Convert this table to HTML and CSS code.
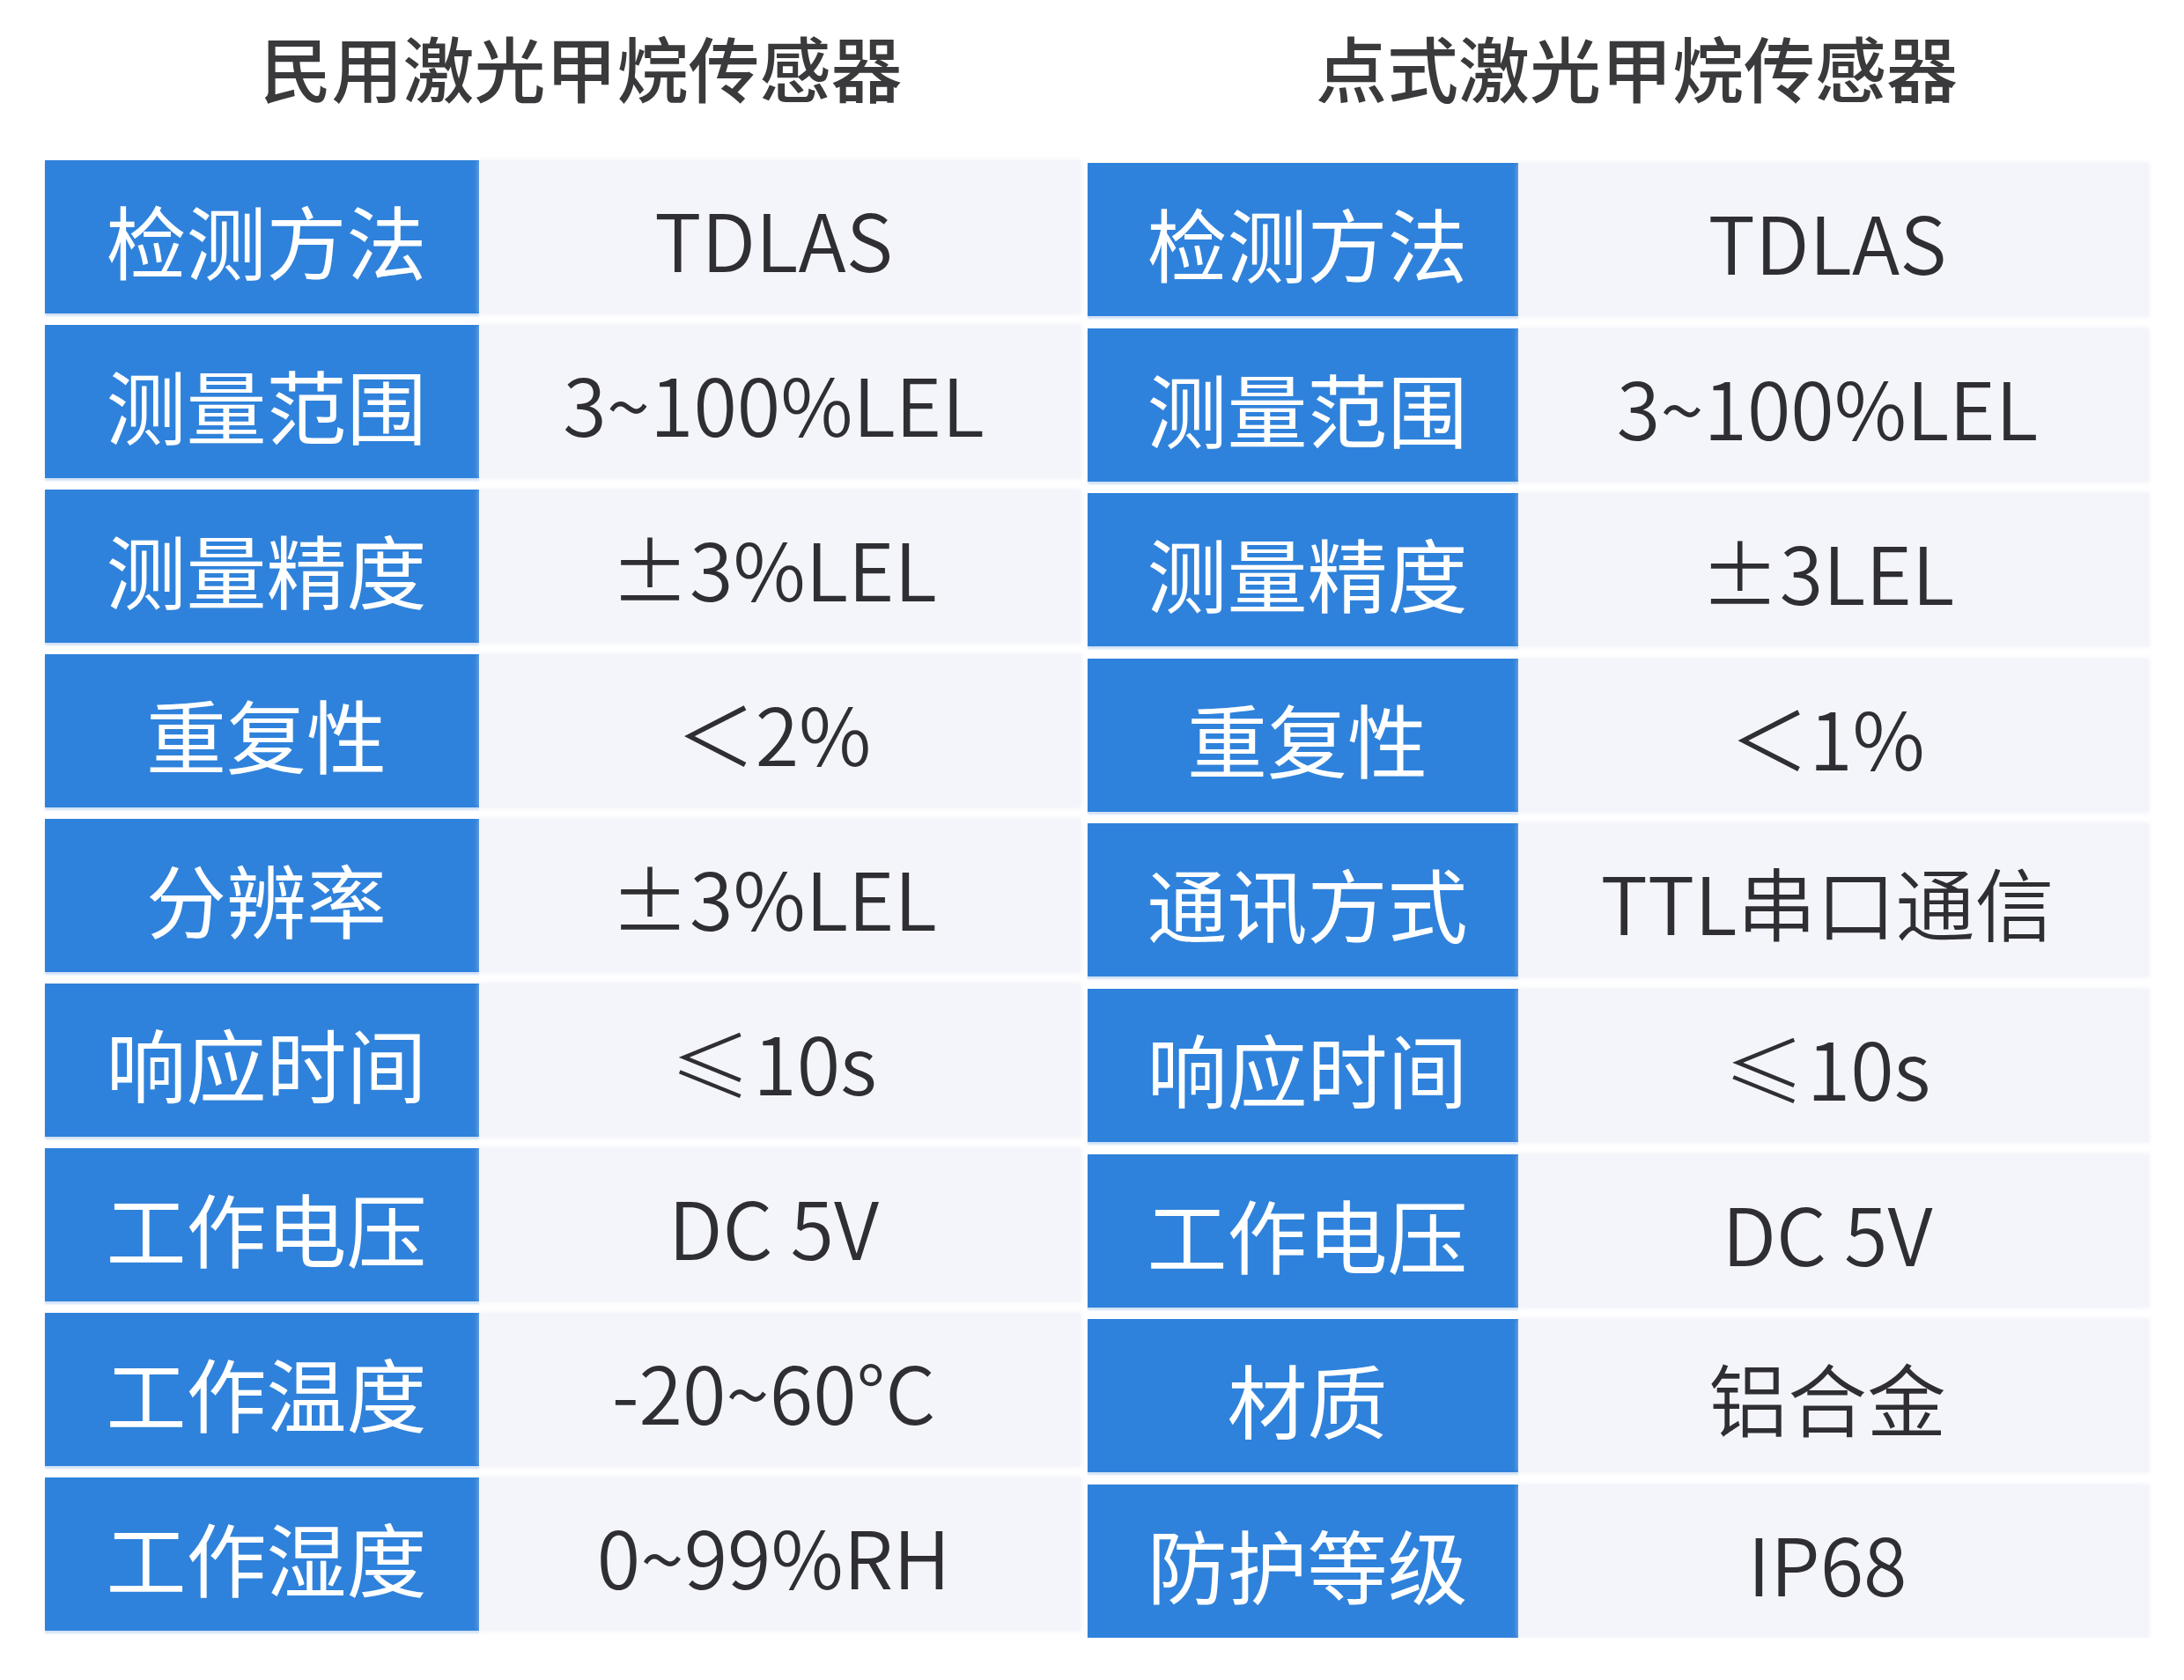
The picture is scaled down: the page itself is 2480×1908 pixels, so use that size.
FILE: index.html
```html
<!DOCTYPE html>
<html lang="zh-CN">
<head>
<meta charset="utf-8">
<title>激光甲烷传感器参数对比</title>
<link rel="stylesheet" href="styles.css">
</head>
<body>
<div class="page">
  <div class="titles">
    <h2 class="title title-left">民用激光甲烷传感器</h2>
    <h2 class="title title-right">点式激光甲烷传感器</h2>
  </div>
  <div class="tables">
    <div class="spec spec-left">
      <div class="label">检测方法</div><div class="value">TDLAS</div>
      <div class="label">测量范围</div><div class="value">3~100%LEL</div>
      <div class="label">测量精度</div><div class="value">±3%LEL</div>
      <div class="label">重复性</div><div class="value">＜2%</div>
      <div class="label">分辨率</div><div class="value">±3%LEL</div>
      <div class="label">响应时间</div><div class="value"><span class="le">≤</span>10s</div>
      <div class="label">工作电压</div><div class="value">DC 5V</div>
      <div class="label">工作温度</div><div class="value">-20~60°C</div>
      <div class="label">工作湿度</div><div class="value">0~99%RH</div>
    </div>
    <div class="spec spec-right">
      <div class="label">检测方法</div><div class="value">TDLAS</div>
      <div class="label">测量范围</div><div class="value">3~100%LEL</div>
      <div class="label">测量精度</div><div class="value">±3LEL</div>
      <div class="label">重复性</div><div class="value">＜1%</div>
      <div class="label">通讯方式</div><div class="value">TTL串口通信</div>
      <div class="label">响应时间</div><div class="value"><span class="le">≤</span>10s</div>
      <div class="label">工作电压</div><div class="value">DC 5V</div>
      <div class="label">材质</div><div class="value">铝合金</div>
      <div class="label">防护等级</div><div class="value">IP68</div>
    </div>
  </div>
</div>
</body>
</html>
```
FILE: styles.css
```css
html, body {
  margin: 0;
  padding: 0;
  background: #ffffff;
}

body {
  font-family: "Noto Sans CJK SC", "Noto Sans", "DejaVu Sans", sans-serif;
  color: #2f2f33;
}

.page {
  display: flex;
  flex-direction: column;
  padding-left: 51px;
  width: 2389px;
}

.titles {
  display: flex;
  gap: 8px;
  height: 182px;
  box-sizing: border-box;
  padding-top: 33px;
}

.title {
  margin: 0;
  font-size: 81px;
  line-height: 84px;
  font-weight: 500;
  color: #3a3a3c;
  text-align: center;
  letter-spacing: 0;
}

.title-left {
  width: 1176px;
  padding-left: 42px;
  box-sizing: border-box;
}

.title-right {
  width: 1205px;
  padding-left: 42px;
  box-sizing: border-box;
}

.tables {
  display: flex;
  gap: 8px;
  align-items: flex-start;
}

.spec {
  display: grid;
  grid-auto-rows: 174px;
  row-gap: 13px;
}

.spec-left {
  grid-template-columns: 493px 683px;
}

.spec-right {
  grid-template-columns: 489px 716px;
  margin-top: 3px;
  row-gap: 13.6px;
}

.label {
  background: #2f82db;
  color: #ffffff;
  font-size: 91px;
  display: flex;
  align-items: center;
  justify-content: center;
  padding-top: 4px;
  padding-left: 10px;
  box-sizing: border-box;
  box-shadow: 0 3px 2px rgba(120, 170, 230, 0.35);
}

.value {
  background: #f4f5fb;
  font-size: 90px;
  font-weight: 350;
  display: flex;
  align-items: center;
  justify-content: center;
  padding-top: 2px;
  padding-right: 14px;
  box-sizing: border-box;
  box-shadow: 0 0 6px rgba(225, 228, 240, 0.6);
  color: #2f2f33;
}

.le {
  font-family: "Noto Sans CJK SC", sans-serif;
  font-weight: 300;
  font-size: 92px;
  line-height: 1;
  margin-right: 2px;
}
```
